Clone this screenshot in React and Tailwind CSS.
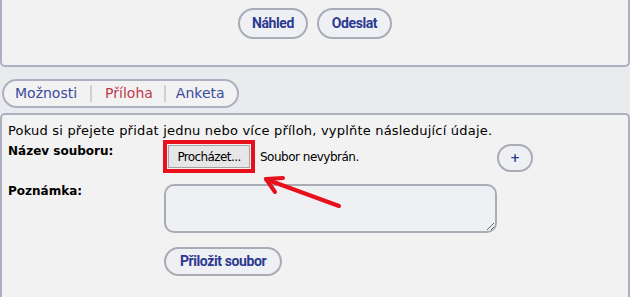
import React from "react";

const pill = "rounded-full border-2 border-[#a9abb7] bg-[#eef0f4] text-[#2b3991] font-bold";

const Btn = ({ children, className = "" }) => (
  <button className={`${pill} tracking-[-0.4px] ${className}`} style={{ fontFamily: "Roboto, 'Liberation Sans', sans-serif" }}>
    {children}
  </button>
);

export default function App() {
  return (
    <div className="relative w-[630px] h-[297px] overflow-hidden bg-[#e9ebef]" style={{ fontFamily: "'DejaVu Sans', Verdana, sans-serif" }}>
      {/* horní panel */}
      <div className="h-[67px] border-2 border-t-0 border-[#adb0be] rounded-b-[5px] bg-[#f2f2f2] flex justify-center gap-[9px] pt-[8px]">
        <Btn className="h-[31px] w-[70px] text-[14px]">Náhled</Btn>
        <Btn className="h-[31px] w-[75px] text-[14px]">Odeslat</Btn>
      </div>

      {/* záložky */}
      <div className="mt-[12px] ml-[2px] w-[237px] h-[29px] rounded-full border-2 border-[#adb0be] bg-[#f2f2f2] flex items-center text-[14px] pl-[11px]">
        <span className="text-[#3c4a9c]">Možnosti</span>
        <span className="mx-[13px] h-[17px] w-[2px] bg-[#cfd1d8]" />
        <span className="text-[#c0394d]">Příloha</span>
        <span className="ml-[11px] mr-[10px] h-[17px] w-[2px] bg-[#cfd1d8]" />
        <span className="text-[#3c4a9c]">Anketa</span>
      </div>

      {/* spodní panel */}
      <div className="mt-[5px] h-[200px] border-2 border-b-0 border-[#adb0be] rounded-t-[5px] bg-[#f2f2f2] pl-[6px] pt-[8px] text-[12px] text-black">
        <div className="leading-[16px] text-[13px] tracking-[0.2px]">Pokud si přejete přidat jednu nebo více příloh, vyplňte následující údaje.</div>

        <div className="flex mt-[1px]">
          <div className="w-[155px] pt-[3px] font-bold leading-[16px]">Název souboru:</div>
          <div className="w-[334px] flex">
            <div className="border-4 border-[#e8101a] p-[1px]">
              <button className="h-[23px] w-[82px] border border-[#a4a4a4] bg-[#e6e6e6] text-[12px] tracking-[-0.6px] text-black">Procházet...</button>
            </div>
            <div className="ml-[5px] self-center text-[12px] tracking-[-0.5px] leading-[16px]">Soubor nevybrán.</div>
          </div>
          <button className={`${pill} mt-[4px] w-[36px] h-[28px] text-[12px] leading-none`}>+</button>
        </div>

        <div className="flex mt-[10px]">
          <div className="w-[156px] font-bold leading-[16px]">Poznámka:</div>
          <textarea className="mt-[1px] w-[333px] h-[49px] rounded-[10px] border-2 border-[#a9abb7] bg-[#eef0f4] resize-y outline-none" />
        </div>

        <div className="pl-[156px] mt-[14px]">
          <Btn className="h-[29px] w-[118px] text-[14px]">Přiložit soubor</Btn>
        </div>
      </div>

      {/* šipka */}
      <svg className="absolute left-0 top-0 pointer-events-none" width="630" height="297">
        <g stroke="#e8101a" strokeWidth="4" strokeLinecap="round" fill="none">
          <line x1="339" y1="206" x2="268" y2="180" />
          <line x1="266" y1="179" x2="283" y2="178" />
          <line x1="266" y1="179" x2="275" y2="192" />
        </g>
      </svg>
    </div>
  );
}
